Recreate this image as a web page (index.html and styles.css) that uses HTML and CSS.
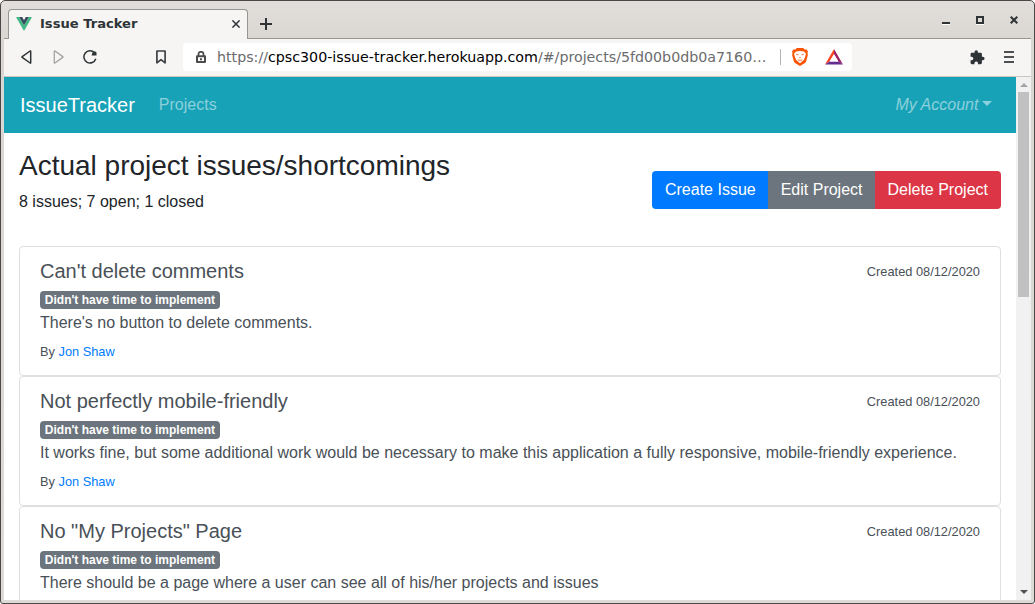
FILE: index.html
```html
<!DOCTYPE html>
<html lang="en">
<head>
<meta charset="utf-8">
<title>Issue Tracker</title>
<link rel="stylesheet" href="styles.css">
</head>
<body>
<div class="window">
  <header class="titlebar">
    <div class="tab">
      <svg class="tab-logo" width="16" height="14" viewBox="0 0 16 14"><path fill="#41b883" d="M0 0h3.2L8 8.3 12.8 0H16L8 14z"/><path fill="#35495e" d="M3.2 0h3L8 3.2 9.8 0h3L8 8.3z"/></svg>
      <span class="tab-title">Issue Tracker</span>
      <svg class="tab-close" width="8" height="8" viewBox="0 0 8 8"><path d="M.4.4l7.2 7.2M7.6.4L.4 7.6" stroke="#2e3436" stroke-width="1.5"/></svg>
    </div>
    <svg class="new-tab" width="12" height="12" viewBox="0 0 12 12"><path d="M6 0v12M0 6h12" stroke="#2e3436" stroke-width="2"/></svg>
    <div class="window-buttons">
      <svg width="8" height="9" viewBox="0 0 8 9"><path fill="#fff" d="M0 8h8v1H0z"/><path fill="#2e3436" d="M0 6h8v2H0z"/></svg>
      <svg width="8" height="9" viewBox="0 0 8 9"><path fill="#fff" d="M0 8h8v1H0z"/><path d="M1 1h6v6H1z" fill="none" stroke="#2e3436" stroke-width="2"/></svg>
      <svg width="8" height="8" viewBox="0 0 8 8"><path d="M.7.7l6.6 6.6M7.3.7L.7 7.3" stroke="#2e3436" stroke-width="2"/></svg>
    </div>
  </header>
  <div class="toolbar">
    <svg class="back" width="12" height="14" viewBox="0 0 12 14"><path d="M9.7 1.2v11.6q0 .6-.6.2L1.2 7.4q-.5-.4 0-.8L9.1 1q.6-.4.6.2z" fill="none" stroke="#2e3436" stroke-width="1.5"/></svg>
    <svg class="forward" width="12" height="14" viewBox="0 0 12 14"><path d="M1.3 1.2v11.6q0 .6.6.2l7.9-5.6q.5-.4 0-.8L1.9 1q-.6-.4-.6.2z" fill="none" stroke="#a3a4a4" stroke-width="1.3"/></svg>
    <svg class="reload" width="14" height="14" viewBox="0 0 14 14"><path d="M12.8 8.8A6.1 6.1 0 1 1 11.5 2.8" fill="none" stroke="#2e3436" stroke-width="1.5"/><path fill="#2e3436" d="M8.5 5.5H13.5V2.5L12 1.2 9.5 2.5z"/></svg>
    <svg class="bookmark" width="10" height="14" viewBox="0 0 10 14"><path d="M.9 1h8.2v11.8L5 9.6.9 12.8z" fill="none" stroke="#3d4244" stroke-width="1.7" stroke-linejoin="round"/></svg>
    <div class="address">
      <svg class="lock" width="10" height="12" viewBox="0 0 10 12"><path d="M2.5 5V3a2.5 2.2 0 0 1 5 0v2" fill="none" stroke="#4c4c4c" stroke-width="1.8"/><path d="M1 5.2h8v5.8H1z" fill="none" stroke="#4c4c4c" stroke-width="2" stroke-linejoin="round"/><path fill="#4c4c4c" d="M4 7.2h2v2H4z"/></svg>
      <span class="url">https://<b>cpsc300-issue-tracker.herokuapp.com</b>/#/projects/5fd00b0db0a7160…</span>
      <i class="divider"></i>
      <svg class="brave" width="16" height="18" viewBox="0 0 16 18"><path fill="#fb5405" d="M4.8 0h6.4l1.5 1.6 2-.1 1.3 2.2-.6 1.4.5 1.8-1.9 6.8Q13.5 14.9 8 18 2.5 14.9 2 13.7L.1 6.9l.5-1.8L0 3.7l1.3-2.2 2 .1z"/><path fill="#fff" d="M4 3.5L8 3l4 .5 2 2.2-.8 2.8-1.2 3.3L8 15.3 4 11.8 2.8 8.5 2 5.7z"/><path d="M4.2 6.3l2.3.6M11.8 6.3l-2.3.6M7.2 9.7h1.6M5.8 11.8L8 12.5l2.2-.7" fill="none" stroke="#fb5405" stroke-width=".8"/></svg>
      <svg class="bat" width="18" height="16" viewBox="0 0 18 16"><path fill="#ff4724" d="M9 0v5.5L4.5 12.5 0 15.5z"/><path fill="#9e1f63" d="M9 0l9 15.5-4.5-3L9 5.5z"/><path fill="#662d91" d="M0 15.5l4.5-3h9l4.5 3z"/><path fill="#fff" d="M9 5l4.3 7.5H4.7z"/></svg>
    </div>
    <svg class="puzzle" width="15" height="15" viewBox="1.5 .7 21.8 22.5"><path fill="#2e3436" d="M20.5 11H19V7c0-1.100-.9-2-2-2h-4V3.500a2.500 2.500 0 0 0-5 0V5H4c-1.100 0-2 .9-2 2v3.800h1.500a2.700 2.700 0 0 1 0 5.400H2V20c0 1.100.9 2 2 2h3.800v-1.500a2.700 2.700 0 0 1 5.400 0V22H17c1.100 0 2-.9 2-2v-4h1.500a2.500 2.500 0 0 0 0-5z"/></svg>
    <svg class="menu" width="10" height="12" viewBox="0 0 10 12"><path fill="#4c5053" d="M0 0h10v2H0zM0 5h10v2H0zM0 10h10v2H0z"/></svg>
  </div>
  <div class="viewport">
    <div class="page">
      <nav class="navbar">
        <a class="brand">IssueTracker</a>
        <a class="nav-link">Projects</a>
        <a class="nav-link account">My Account</a>
      </nav>
      <main class="container">
        <section class="project-head">
          <div>
            <h3>Actual project issues/shortcomings</h3>
            <p>8 issues; 7 open; 1 closed</p>
          </div>
          <div class="btn-group">
            <a class="btn primary">Create Issue</a>
            <a class="btn secondary">Edit Project</a>
            <a class="btn danger">Delete Project</a>
          </div>
        </section>
        <article class="issue">
          <div class="issue-head"><h5>Can't delete comments</h5><small>Created 08/12/2020</small></div>
          <div><span class="badge">Didn't have time to implement</span></div>
          <p>There's no button to delete comments.</p>
          <div><small>By <a>Jon Shaw</a></small></div>
        </article>
        <article class="issue">
          <div class="issue-head"><h5>Not perfectly mobile-friendly</h5><small>Created 08/12/2020</small></div>
          <div><span class="badge">Didn't have time to implement</span></div>
          <p>It works fine, but some additional work would be necessary to make this application a fully responsive, mobile-friendly experience.</p>
          <div><small>By <a>Jon Shaw</a></small></div>
        </article>
        <article class="issue">
          <div class="issue-head"><h5>No "My Projects" Page</h5><small>Created 08/12/2020</small></div>
          <div><span class="badge">Didn't have time to implement</span></div>
          <p>There should be a page where a user can see all of his/her projects and issues</p>
        </article>
      </main>
    </div>
    <div class="scrollbar">
      <i class="arrow up"></i>
      <i class="thumb"></i>
      <i class="arrow down"></i>
    </div>
  </div>
</div>
</body>
</html>
```
FILE: styles.css
```css
* { box-sizing: border-box; }
body { margin: 0; background: #fff; overflow: hidden; }
svg { display: block; flex: none; }

/* Window frame */
.window {
  width: 1035px; height: 604px;
  display: flex; flex-direction: column;
  padding: 0 3px 3px;
  border: 1px solid #4b484a;
  border-radius: 5px 5px 3px 3px;
  background: linear-gradient(#e2dedb, #dad6d2 38px, #dedad6);
  font-family: "DejaVu Sans", sans-serif;
}
.titlebar {
  flex: none; height: 38px;
  display: flex; align-items: flex-start;
  border-bottom: 1px solid #979591;
}
.tab {
  width: 240px; height: 30px;
  margin: 8px 0 0 4px; padding: 0 7px;
  display: flex; align-items: center;
  background: #f6f5f4;
  border: 1px solid #979591; border-bottom: 0;
  border-radius: 4px 4px 0 0;
}
.tab-title { margin-left: 8px; padding-bottom: 2px; font-size: 13.1px; font-weight: 700; line-height: 26px; color: #2e3436; }
.tab-logo { margin-bottom: 1px; }
.tab-close { margin-left: auto; margin-bottom: 1px; }
.new-tab { margin: 17px 0 0 12px; }
.window-buttons { margin: 15px 13px 0 auto; display: flex; gap: 26px; }

/* Toolbar */
.toolbar {
  flex: none; height: 38px;
  display: flex; align-items: center;
  padding: 0 17px 1px;
  background: #f6f5f4;
  border-bottom: 1px solid #cbc6c0;
}
.forward { margin-left: 20px; }
.reload { margin-left: 18px; }
.bookmark { margin-left: 59px; }
.address {
  width: 669px; height: 28px;
  margin-left: 17px; padding-left: 13px;
  display: flex; align-items: center;
  background: #fff; border-radius: 4px;
}
.url { width: 563px; margin-left: 11px; font-size: 14.22px; line-height: 28px; color: #6a6b6c; white-space: nowrap; }
.url b { font-weight: 400; color: #000; }
.divider { width: 1px; height: 16px; background: #b4b4b4; }
.brave { margin-left: 11px; }
.bat { margin-left: 17px; }
.puzzle { margin-left: 118px; }
.menu { margin-left: 19px; }

/* Page viewport */
.viewport {
  flex: 1; min-height: 0;
  display: flex; overflow: hidden;
  background: #fff; color: #212529;
  font: 16px/24px "Liberation Sans", Arial, sans-serif;
}
.page { flex: 1; min-width: 0; overflow: hidden; }
h3, h5, p { margin: 0; font-weight: 400; }
.navbar {
  height: 56px; padding: 0 24px 0 16px;
  display: flex; align-items: center;
  background: #17a2b8;
}
.brand { font-size: 20px; line-height: 30px; color: #fff; }
.nav-link { margin-left: 24px; color: rgba(255, 255, 255, .5); }
.account { margin-left: auto; font-style: italic; }
.account::after {
  content: ""; display: inline-block;
  margin-left: 3.6px; vertical-align: 4px;
  border: 5px solid transparent; border-top-color: currentColor; border-bottom: 0;
}
.container { padding: 16px 15px 0; }
.project-head { height: 97px; display: flex; justify-content: space-between; align-items: flex-start; }
h3 { margin-bottom: 7px; font-size: 28px; line-height: 33.6px; }
.btn-group { display: flex; margin-top: 22px; border-radius: 4px; overflow: hidden; }
.btn { padding: 7px 13px; color: #fff; }
.btn + .btn { margin-left: -1px; }
.primary { background: #007bff; }
.secondary { background: #6c757d; }
.danger { background: #dc3545; }
.issue {
  height: 130px; padding: 12px 20px;
  border: 1px solid #dfdfdf; border-radius: 4px;
  color: #495057;
}
.issue-head { display: flex; justify-content: space-between; }
.issue-head small { padding-top: 1px; line-height: 23px; margin-bottom: -1px; }
h5 { margin-bottom: 4px; font-size: 20px; line-height: 24px; }
small { font-size: 12.8px; }
.issue p { margin-bottom: 4px; }
.issue a { color: #007bff; }
.badge {
  display: inline-block; padding: 3px 4.8px;
  font-size: 12px; font-weight: 700; line-height: 12px;
  color: #fff; background: #6c757d; border-radius: 4px;
}

/* Scrollbar */
.scrollbar {
  width: 15px; flex: none;
  display: flex; flex-direction: column; align-items: center;
  background: #f1f1f1;
}
.thumb { width: 11px; height: 205px; margin-top: 5px; background: #c1c1c1; }
.arrow { border: 4px solid transparent; }
.up { margin-top: 6px; border-top: 0; border-bottom-color: #a3a3a3; }
.down { margin: auto 0 6px; border-bottom: 0; border-top-color: #505050; }
```
